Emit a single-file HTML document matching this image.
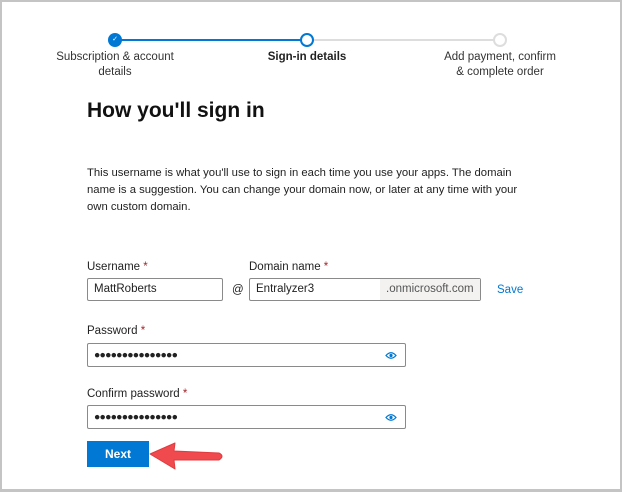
<!DOCTYPE html>
<html><head><style>
body{margin:0;width:622px;height:492px;overflow:hidden;font-family:"Liberation Sans",sans-serif;color:#222;}
.frame{position:absolute;left:0;top:0;width:618px;height:487px;border:2px solid #c4c4c4;border-bottom-width:3px;background:#fff;}
.a{position:absolute;}
.lbl{font-size:11.5px;color:#333;text-align:center;line-height:15px;}
.inp{position:absolute;border:1px solid #8a8a8a;border-radius:2px;height:21px;box-sizing:border-box;font-size:11.5px;line-height:19px;padding-left:6px;background:#fff;}
.fl{position:absolute;font-size:11.5px;color:#222;}
.fl b{color:#a4262c;font-weight:normal;}
.dots{letter-spacing:-0.8px;font-size:10.5px;}
</style></head><body>
<div class="frame"></div>
<div class="a" style="left:121px;top:39px;width:180px;height:2px;background:#0078d4"></div>
<div class="a" style="left:313px;top:39px;width:181px;height:2px;background:#ddd"></div>
<div class="a" style="left:108px;top:33px;width:14px;height:14px;border-radius:50%;background:#0078d4;color:#fff;font-size:7px;text-align:center;line-height:14px">✓</div>
<div class="a" style="left:300px;top:33px;width:10px;height:10px;border-radius:50%;border:2px solid #0078d4;background:#fff"></div>
<div class="a" style="left:493px;top:33px;width:10px;height:10px;border-radius:50%;border:2px solid #ddd;background:#fff"></div>
<div class="a lbl" style="left:40px;top:50px;width:150px">Subscription &amp; account<br>details</div>
<div class="a lbl" style="left:232px;top:50px;width:150px;font-weight:bold;color:#222">Sign-in details</div>
<div class="a lbl" style="left:425px;top:50px;width:150px">Add payment, confirm<br>&amp; complete order</div>
<div class="a" style="left:87px;top:99px;font-size:21px;font-weight:bold;color:#111">How you'll sign in</div>
<div class="a" style="left:87px;top:165px;width:440px;font-size:11.3px;line-height:17px;color:#222">This username is what you'll use to sign in each time you use your apps. The domain name is a suggestion. You can change your domain now, or later at any time with your own custom domain.</div>
<div class="fl" style="left:87px;top:261px">Username <b>*</b></div>
<div class="fl" style="left:249px;top:261px">Domain name <b>*</b></div>
<div class="inp" style="left:87px;top:278px;width:136px;height:23px;line-height:21px">MattRoberts</div>
<div class="fl" style="left:232px;top:284px">@</div>
<div class="inp" style="left:249px;top:278px;width:232px;height:23px;line-height:21px">Entralyzer3<span style="position:absolute;right:0;top:0;bottom:0;width:100px;background:#f3f2f1;color:#555;padding-left:6px;box-sizing:border-box">.onmicrosoft.com</span></div>
<div class="fl" style="left:497px;top:284px;color:#0078d4">Save</div>
<div class="fl" style="left:87px;top:325px">Password <b>*</b></div>
<div class="inp dots" style="left:87px;top:343px;width:319px;height:24px;line-height:22px">●●●●●●●●●●●●●●●<svg style="position:absolute;right:8px;top:7px" width="12" height="9"><path d="M1 4.5 Q6 -1 11 4.5 Q6 10 1 4.5Z" fill="none" stroke="#0078d4" stroke-width="1.2"/><circle cx="6" cy="4.5" r="1.6" fill="#0078d4"/></svg></div>
<div class="fl" style="left:87px;top:388px">Confirm password <b>*</b></div>
<div class="inp dots" style="left:87px;top:405px;width:319px;height:24px;line-height:22px">●●●●●●●●●●●●●●●<svg style="position:absolute;right:8px;top:7px" width="12" height="9"><path d="M1 4.5 Q6 -1 11 4.5 Q6 10 1 4.5Z" fill="none" stroke="#0078d4" stroke-width="1.2"/><circle cx="6" cy="4.5" r="1.6" fill="#0078d4"/></svg></div>
<div class="a" style="left:87px;top:441px;width:62px;height:26px;background:#0078d4;color:#fff;font-size:12px;font-weight:bold;text-align:center;line-height:26px">Next</div>
<svg class="a" style="left:148px;top:440px" width="80" height="32"><path d="M2 14 L27 3 L26 11 L71 13 Q77 16 71 20 L26 20 L27 29 Z" fill="#f04a4f" stroke="#e03a3f" stroke-linejoin="round"/></svg>
</body></html>
